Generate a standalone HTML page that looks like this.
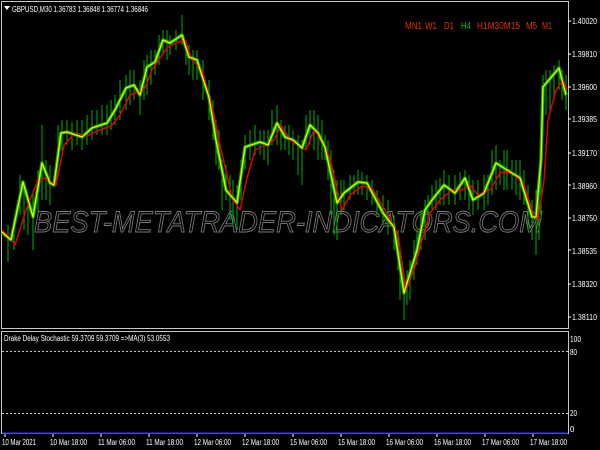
<!DOCTYPE html>
<html><head><style>
html,body{margin:0;padding:0;background:#000;width:600px;height:450px;overflow:hidden}
svg{display:block}
text{font-family:"Liberation Sans",sans-serif}
</style></head><body>
<svg width="600" height="450" viewBox="0 0 600 450" xmlns="http://www.w3.org/2000/svg">
<rect width="600" height="450" fill="#000"/>
<rect x="1.5" y="1.5" width="567" height="327" fill="none" stroke="#c8c8c8" stroke-width="1"/>
<rect x="1.5" y="331.5" width="567" height="102" fill="none" stroke="#c8c8c8" stroke-width="1"/>
<line x1="2" y1="433" x2="568" y2="433" stroke="#2020c0" stroke-width="1.5"/>
<text x="34" y="232" font-size="30" font-style="italic" fill="none" stroke="#7a7a7a" stroke-width="0.9" textLength="508" lengthAdjust="spacingAndGlyphs">BEST-METATRADER-INDICATORS.COM</text>
<g stroke="#00b000" stroke-width="1">
<path d="M8 225V262M14 228V250M20 175V215M24 185V230M28 200V235M33 190V250M38 170V215M42 125V200M46 160V200M50 165V205M58 125V160M62 120V150M67 120V145M72 122V150M77 120V145M82 120V150M87 115V145M92 110V140M97 110V135M102 105V135M107 105V135M111 100V130M115 95V125M120 80V120M126 75V110M130 70V105M134 70V100M140 80V115M144 60V100M147 55V95M151 50V85M155 50V75M159 35V65M163 30V55M167 30V60M170 35V55M176 30V50M182 15V45M186 40V65M189 45V75M193 50V80M197 50V80M203 60V100M209 80V120M213 100V140M216 120V165M219 130V170M222 160V210M226 165V200M230 175V220M233 180V225M237 185V230M241 160V200M245 135V170M250 130V160M255 125V155M260 130V155M264 130V160M268 130V165M272 110V145M277 105V145M281 120V150M285 125V150M289 125V155M293 130V160M298 135V175M302 140V185M306 115V150M310 110V145M314 110V150M318 115V160M322 120V160M325 135V160M328 140V180M331 150V215M334 170V235M337 180V240M341 180V215M344 180V210M350 175V200M354 175V195M358 170V195M362 172V195M367 175V200M372 180V205M377 190V215M383 195V225M388 200V235M394 215V250M398 230V270M400 250V300M404 275V320M407 270V305M410 260V300M414 240V280M417 230V265M421 210V250M425 200V240M428 195V225M432 185V210M436 180V210M440 178V205M444 170V205M449 175V205M455 175V205M460 172V200M465 170V200M469 175V210M473 180V215M478 180V210M484 175V210M488 175V205M492 150V195M496 145V190M500 160V185M504 150V190M507 150V190M512 160V190M516 160V195M520 160V200M524 170V205M528 185V230M532 200V240M536 190V255M539 180V240M541 125V220M543 75V125M546 70V115M550 70V110M554 65V100M559 60V90M562 70V100M566 75V110"/>
</g>
<polyline fill="none" stroke="#00a800" stroke-width="3.5" stroke-linejoin="round" points="2,232 11,240 23,182 33,217 42,163 50,183 54,185 61,133 67,132 82,137 92,128 107,123 115,110 126,88 134,85 140,95 147,67 155,62 163,40 170,43 182,35 189,57 197,60 209,97 216,140 222,170 226,190 237,203 245,147 260,142 268,145 277,123 285,137 293,140 302,148 310,125 318,133 325,147 331,175 337,203 344,193 358,182 367,183 383,213 394,227 404,293 417,250 425,210 432,200 444,185 455,193 465,178 473,200 484,193 496,163 507,170 520,178 532,217 536,217 541,160 543,87 559,68 566,95"/>
<polyline fill="none" stroke="#e00000" stroke-width="1.5" stroke-linejoin="round" points="2,230 8,236 15,245 26,210 38,180 46,178 56,185 64,145 75,133 87,136 97,131 111,126 120,115 130,95 138,92 145,88 152,70 162,55 168,47 176,43 185,40 192,60 202,70 213,110 220,145 227,175 232,198 240,210 247,178 255,150 265,145 274,140 281,125 290,140 298,145 306,150 314,130 322,140 330,158 336,185 342,210 350,195 362,186 372,188 388,215 398,235 406,290 414,270 422,240 430,213 440,200 452,190 462,190 470,185 478,195 490,190 500,173 512,172 524,185 532,210 538,220 544,180 548,120 556,90 563,80 567,90"/>
<polyline fill="none" stroke="#f0f000" stroke-width="1.3" stroke-linejoin="round" points="2,232 11,240 23,182 33,217 42,163 50,183 54,185 61,133 67,132 82,137 92,128 107,123 115,110 126,88 134,85 140,95 147,67 155,62 163,40 170,43 182,35 189,57 197,60 209,97 216,140 222,170 226,190 237,203 245,147 260,142 268,145 277,123 285,137 293,140 302,148 310,125 318,133 325,147 331,175 337,203 344,193 358,182 367,183 383,213 394,227 404,293 417,250 425,210 432,200 444,185 455,193 465,178 473,200 484,193 496,163 507,170 520,178 532,217 536,217 541,160 543,87 559,68 566,95"/>
<path d="M4 6h6l-3 4z" fill="#fff"/>
<text x="12" y="12" font-size="8" fill="#fff" textLength="136" lengthAdjust="spacingAndGlyphs">GBPUSD,M30  1.36783 1.36848 1.36774 1.36846</text>
<g font-size="10" fill="#e03000">
<text x="405" y="29" textLength="17" lengthAdjust="spacingAndGlyphs">MN1</text>
<text x="425" y="29" textLength="12" lengthAdjust="spacingAndGlyphs">W1</text>
<text x="444" y="29" textLength="10" lengthAdjust="spacingAndGlyphs">D1</text>
<text x="461" y="29" fill="#00c000" textLength="10" lengthAdjust="spacingAndGlyphs">H4</text>
<text x="477" y="29" textLength="43" lengthAdjust="spacingAndGlyphs">H1M30M15</text>
<text x="526" y="29" textLength="11" lengthAdjust="spacingAndGlyphs">M5</text>
<text x="542" y="29" textLength="10" lengthAdjust="spacingAndGlyphs">M1</text>
</g>
<g font-size="8" fill="#fff">
<text x="572" y="24" textLength="25" lengthAdjust="spacingAndGlyphs">1.40020</text>
<text x="572" y="57" textLength="25" lengthAdjust="spacingAndGlyphs">1.39810</text>
<text x="572" y="90" textLength="25" lengthAdjust="spacingAndGlyphs">1.39600</text>
<text x="572" y="122" textLength="25" lengthAdjust="spacingAndGlyphs">1.39385</text>
<text x="572" y="156" textLength="25" lengthAdjust="spacingAndGlyphs">1.39170</text>
<text x="572" y="189" textLength="25" lengthAdjust="spacingAndGlyphs">1.38960</text>
<text x="572" y="221" textLength="25" lengthAdjust="spacingAndGlyphs">1.38750</text>
<text x="572" y="254" textLength="25" lengthAdjust="spacingAndGlyphs">1.38535</text>
<text x="572" y="287" textLength="25" lengthAdjust="spacingAndGlyphs">1.38320</text>
<text x="572" y="320" textLength="25" lengthAdjust="spacingAndGlyphs">1.38110</text>
<text x="570" y="342" textLength="11" lengthAdjust="spacingAndGlyphs">100</text>
<text x="570" y="355" textLength="7" lengthAdjust="spacingAndGlyphs">80</text>
<text x="570" y="416" textLength="7" lengthAdjust="spacingAndGlyphs">20</text>
<text x="570" y="432">0</text>
</g>
<g stroke="#fff"><path d="M568 21h3M568 54h3M568 87h3M568 119h3M568 153h3M568 185h3M568 218h3M568 250h3M568 284h3M568 317h3"/></g>
<text x="4" y="341" font-size="8" fill="#fff" textLength="166" lengthAdjust="spacingAndGlyphs">Drake Delay Stochastic 59.3709 59.3709  =&gt;MA(3) 53.0553</text>
<g stroke="#c8c8c8" stroke-dasharray="2,2"><line x1="2" y1="351.5" x2="568" y2="351.5"/><line x1="2" y1="413.5" x2="568" y2="413.5"/></g>
<g font-size="8" fill="#fff">
<text x="2" y="445" textLength="34" lengthAdjust="spacingAndGlyphs">10 Mar 2021</text>
<text x="50" y="445" textLength="37" lengthAdjust="spacingAndGlyphs">10 Mar 18:00</text>
<text x="98" y="445" textLength="37" lengthAdjust="spacingAndGlyphs">11 Mar 06:00</text>
<text x="146" y="445" textLength="37" lengthAdjust="spacingAndGlyphs">11 Mar 18:00</text>
<text x="194" y="445" textLength="37" lengthAdjust="spacingAndGlyphs">12 Mar 06:00</text>
<text x="242" y="445" textLength="37" lengthAdjust="spacingAndGlyphs">12 Mar 18:00</text>
<text x="290" y="445" textLength="37" lengthAdjust="spacingAndGlyphs">15 Mar 06:00</text>
<text x="338" y="445" textLength="37" lengthAdjust="spacingAndGlyphs">15 Mar 18:00</text>
<text x="386" y="445" textLength="37" lengthAdjust="spacingAndGlyphs">16 Mar 06:00</text>
<text x="434" y="445" textLength="37" lengthAdjust="spacingAndGlyphs">16 Mar 18:00</text>
<text x="482" y="445" textLength="37" lengthAdjust="spacingAndGlyphs">17 Mar 06:00</text>
<text x="530" y="445" textLength="37" lengthAdjust="spacingAndGlyphs">17 Mar 18:00</text>
</g>
<g stroke="#fff"><path d="M5 434v3M53 434v3M101 434v3M149 434v3M197 434v3M245 434v3M293 434v3M341 434v3M389 434v3M437 434v3M485 434v3M533 434v3"/></g>
</svg>
</body></html>
